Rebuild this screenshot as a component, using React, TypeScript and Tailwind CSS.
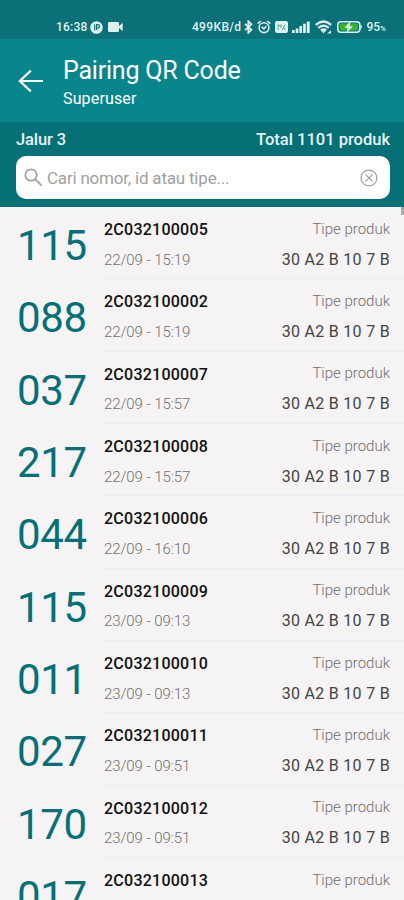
import React from "react";

const products = [
  { number: "115", code: "2C032100005", date: "22/09 - 15:19" },
  { number: "088", code: "2C032100002", date: "22/09 - 15:19" },
  { number: "037", code: "2C032100007", date: "22/09 - 15:57" },
  { number: "217", code: "2C032100008", date: "22/09 - 15:57" },
  { number: "044", code: "2C032100006", date: "22/09 - 16:10" },
  { number: "115", code: "2C032100009", date: "23/09 - 09:13" },
  { number: "011", code: "2C032100010", date: "23/09 - 09:13" },
  { number: "027", code: "2C032100011", date: "23/09 - 09:51" },
  { number: "170", code: "2C032100012", date: "23/09 - 09:51" },
  { number: "017", code: "2C032100013", date: "" },
];

function StatusBar() {
  return (
    <div className="flex h-[39px] shrink-0 items-center bg-[#0b7077] pr-[18px] pl-14 pt-[15px] text-[12px] font-medium text-[#dff1f1]">
      <span className="w-[35px] tracking-[0.2px]">16:38</span>
      <svg width="13" height="13" viewBox="0 0 13 13" className="ml-[-1px]">
        <circle cx="6.5" cy="6.5" r="6.3" fill="currentColor" />
        <path
          d="M4.7 9.6V3.6M6.6 9V3.6H7.8A1.7 1.7 0 0 1 7.8 7H6.6"
          fill="none"
          stroke="#0b7077"
          strokeWidth="1.2"
        />
      </svg>
      <svg width="15" height="10" viewBox="0 0 15 10" className="ml-[5px]">
        <rect width="11" height="10" rx="1.2" fill="currentColor" />
        <path d="M10.5 4.5L14.7 0.8V9.2L10.5 5.5Z" fill="currentColor" />
      </svg>
      <span className="ml-auto tracking-[0.35px]">499KB/d</span>
      <svg width="9" height="14" viewBox="0 0 9 14" className="ml-[3px]">
        <path
          d="M1 3.8L7.5 9.8L4.3 12.8V1.2L7.5 4.2L1 10.2"
          fill="none"
          stroke="currentColor"
          strokeWidth="1.7"
        />
      </svg>
      <svg
        width="14"
        height="14"
        viewBox="0 0 14 14"
        className="ml-[4px]"
        fill="none"
        stroke="currentColor"
        strokeWidth="1.6"
      >
        <circle cx="7" cy="7.7" r="4.9" />
        <path d="M0.7 3.6L3.8 1M13.3 3.6L10.2 1M4.7 6.8L6.9 8.8L9.3 6.2" />
      </svg>
      <svg width="13" height="12" viewBox="0 0 13 12" className="ml-[4px]">
        <rect width="13" height="12" rx="2" fill="currentColor" />
        <path
          d="M3.2 9V3.3L6 6.5V3.3M7.4 9L10 3.5M8.3 6.2L10.3 9"
          fill="none"
          stroke="#5e9da1"
          strokeWidth="1"
        />
      </svg>
      <svg
        width="18"
        height="12"
        viewBox="0 0 18 12"
        className="ml-[4px]"
        fill="currentColor"
      >
        <rect x="0" y="9" width="2.7" height="3" />
        <rect x="3.7" y="7.5" width="2.7" height="4.5" />
        <rect x="7.4" y="5" width="2.7" height="7" />
        <rect x="11.1" y="2.7" width="2.7" height="9.3" />
        <rect x="14.8" y="0.5" width="2.9" height="11.5" />
      </svg>
      <svg
        width="17"
        height="14"
        viewBox="0 0 17 14"
        className="ml-[5px]"
        fill="none"
        stroke="currentColor"
        strokeWidth="2.3"
      >
        <path d="M0.8 4.8Q8.5 -1.8 16.2 4.8M3.3 7.8Q8.5 3.4 13.7 7.8M5.9 10.6Q8.5 8.4 11.1 10.6" />
        <path d="M6.7 11L8.5 13.4L10.3 11Z" fill="currentColor" stroke="none" />
        <path d="M12.2 13.4L16 10.2V13.4Z" fill="currentColor" stroke="none" />
      </svg>
      <svg width="26" height="12" viewBox="0 0 26 12" className="ml-[5px]">
        <rect
          x="0.8"
          y="0.8"
          width="22"
          height="10.4"
          rx="3"
          fill="none"
          stroke="currentColor"
          strokeWidth="1.6"
        />
        <rect x="2.7" y="2.6" width="18.2" height="6.8" rx="1" fill="#35b52b" />
        <path d="M23.5 3.3Q26.3 6 23.5 8.7Z" fill="currentColor" />
        <path
          d="M13.4 0.2L7.4 6.8H10.6L9.8 11.8L16 5.2H12.8Z"
          fill="currentColor"
        />
      </svg>
      <span className="ml-[3px] flex items-baseline">
        95<span className="text-[8px]">%</span>
      </span>
    </div>
  );
}

function Header() {
  return (
    <header className="flex h-[83px] shrink-0 items-center bg-[#09868c] pl-[18px] text-white">
      <svg
        width="26"
        height="24"
        viewBox="0 0 26 24"
        fill="none"
        stroke="currentColor"
        strokeWidth="2.2"
      >
        <path d="M25 12H1.8M12.8 1.6L1.8 12L12.8 22.4" />
      </svg>
      <div className="ml-[19px] pt-[5px]">
        <h1 className="text-[25px] leading-[30px] tracking-[-0.2px]">
          Pairing QR Code
        </h1>
        <p className="text-[16px] leading-[25px] tracking-[0.15px]">
          Superuser
        </p>
      </div>
    </header>
  );
}

function SearchPanel() {
  return (
    <section className="h-[85px] shrink-0 bg-[#067077] pt-2 pr-[14px] pl-4">
      <div className="flex justify-between text-[16.5px] leading-5 font-medium text-[#e8f4f4]">
        <span className="tracking-[-0.1px]">Jalur 3</span>
        <span>Total 1101 produk</span>
      </div>
      <div className="mt-[6px] flex h-[43px] items-center rounded-[10px] bg-white px-2 text-[#a0a0a0]">
        <svg
          width="19"
          height="19"
          viewBox="0 0 19 19"
          fill="none"
          stroke="currentColor"
          strokeWidth="1.7"
        >
          <circle cx="7" cy="7" r="5.7" />
          <path d="M11.2 11.2L17.8 17.8" />
        </svg>
        <span className="ml-1 pt-[3px] text-[17px] tracking-[-0.2px]">
          Cari nomor, id atau tipe...
        </span>
        <svg
          width="18"
          height="18"
          viewBox="0 0 18 18"
          className="ml-auto mr-[4px]"
          fill="none"
          stroke="currentColor"
          strokeWidth="1.2"
        >
          <circle cx="9" cy="9" r="7.9" />
          <path d="M5.4 5.4L12.6 12.6M12.6 5.4L5.4 12.6" />
        </svg>
      </div>
    </section>
  );
}

function App() {
  return (
    <div className="flex h-[900px] w-[404px] flex-col overflow-hidden bg-[#f5f3f4] font-['Roboto',sans-serif]">
      <StatusBar />
      <Header />
      <SearchPanel />
      <main className="relative min-h-0 flex-1 overflow-hidden">
        <div className="absolute top-0 right-0 h-2 w-[3px] bg-[#aaa8a9]" />
        {products.map((product) => (
          <div key={product.code} className="flex h-[72.35px] pl-[17px]">
            <div className="w-[87px] pt-[14px] text-[42px] leading-[49px] tracking-[-0.3px] text-[#067077]">
              {product.number}
            </div>
            <div className="flex flex-1 justify-between border-b border-[#efedee] pt-[12px] pr-[14px]">
              <div>
                <div className="pt-px text-[16px] leading-5 font-medium tracking-[0.25px] text-[#111]">
                  {product.code}
                </div>
                <div className="mt-[9.5px] text-[15px] leading-5 font-light tracking-[-0.08px] text-[#707070]">
                  {product.date}
                </div>
              </div>
              <div className="text-right">
                <div className="-mt-[0.5px] text-[15px] leading-5 font-light text-[#707070]">
                  Tipe produk
                </div>
                {product.date && (
                  <div className="mt-[10px] pt-px text-[16px] leading-5 tracking-[0.3px] text-[#444]">
                    30 A2 B 10 7 B
                  </div>
                )}
              </div>
            </div>
          </div>
        ))}
      </main>
    </div>
  );
}

export default App;
